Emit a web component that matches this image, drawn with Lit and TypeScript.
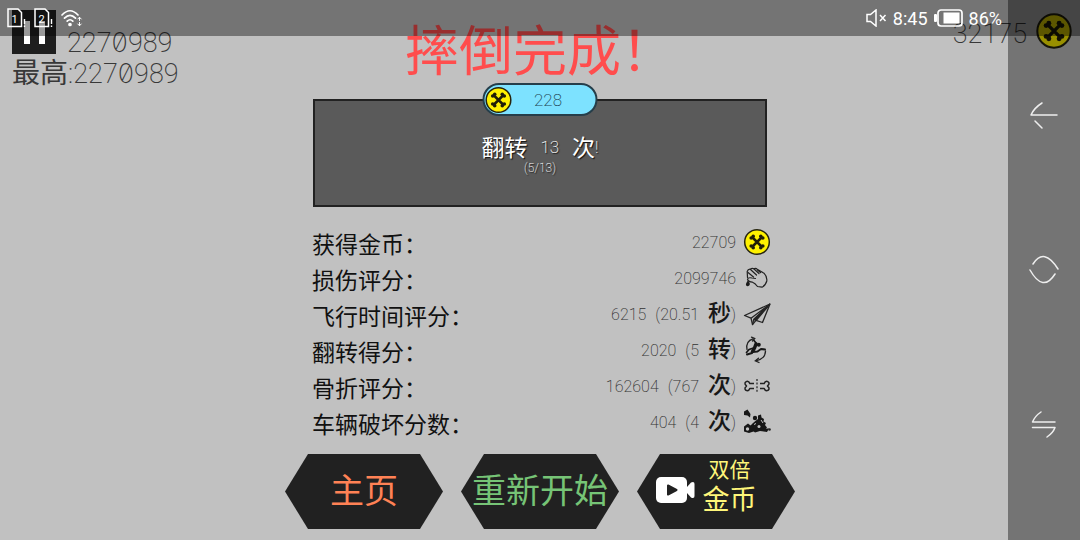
import { LitElement, html, css, svg, nothing } from "lit";
import { customElement, property } from "lit/decorators.js";

type Row = { label: string; value: string; extra?: string; unit?: string; icon: string };

const rows: Row[] = [
  { label: "获得金币：", value: "22709", icon: "coin" },
  { label: "损伤评分：", value: "2099746", icon: "fist" },
  { label: "飞行时间评分：", value: "6215", extra: "(20.51", unit: "秒", icon: "plane" },
  { label: "翻转得分：", value: "2020", extra: "(5", unit: "转", icon: "flip" },
  { label: "骨折评分：", value: "162604", extra: "(767", unit: "次", icon: "bone" },
  { label: "车辆破坏分数：", value: "404", extra: "(4", unit: "次", icon: "crash" },
];

const glyphs: Record<string, unknown> = {
  coin: svg`
    <circle cx="14" cy="14" r="12.3" fill="#fff100" stroke="#26240f" stroke-width="1.5"/>
    <g stroke="#201d08" stroke-width="2.5" fill="none"><path d="M9.5 9.5l9 9M18.5 9.5l-9 9"/></g>
    <g fill="#201d08">
      <circle cx="8.2" cy="10" r="1.8"/><circle cx="10.2" cy="8.3" r="1.8"/>
      <circle cx="17.8" cy="8.3" r="1.8"/><circle cx="19.8" cy="10" r="1.8"/>
      <circle cx="8.2" cy="18" r="1.8"/><circle cx="10.2" cy="19.7" r="1.8"/>
      <circle cx="17.8" cy="19.7" r="1.8"/><circle cx="19.8" cy="18" r="1.8"/>
    </g>`,
  fist: svg`
    <g fill="none" stroke="#222" stroke-width="1.2" stroke-linejoin="round" stroke-linecap="round">
      <path d="M4.5 13.5L4.2 7.5Q5 4.8 7.5 5.2Q9 3.6 11 4.8Q12.8 3.8 14.6 5.6L21 9.2Q24.3 12.500 23.800 17Q22.500 21.500 19 23.200L14.500 22.500Q12 19 9.500 18.200Q5.500 18 4.500 15.200Q5 13.200 9 14L12.500 14.500"/>
      <path d="M7.500 5.500L13.500 11M11 5L16 9.500M5 8.500L10.500 13M14.500 6L17.500 8.500"/>
    </g>
    <path d="M4.800 16.500Q8 19.500 6.200 21.500Q4.500 23 3.200 21.500Q2.200 20 4.800 16.500Z" fill="#1c1c1c"/>`,
  plane: svg`
    <g fill="none" stroke="#252525" stroke-width="1.3" stroke-linejoin="round">
      <path d="M27 4L1.500 15.500L8 18.200L9.500 24.500L13 20.300L19.500 22.500Z"/>
      <path d="M27 4L8 18.200M27 4L10.800 19.200L9.500 24.500M10.800 19.200L13 20.300"/>
      <path d="M25 6.500L11.500 19.500L13.500 20Z" fill="#252525"/>
    </g>`,
  flip: svg`
    <g fill="none" stroke="#222" stroke-width="1.3" stroke-linecap="round">
      <path d="M4 13.500Q2.500 5 10 2.800"/><path d="M8.500 1.200L11.700 2.600L9.500 5"/>
      <path d="M22.500 15Q22.500 22.500 13.500 24.500"/><path d="M15.500 22.200L12.300 24.800L16 26.500"/>
    </g>
    <g fill="none" stroke="#171717" stroke-linecap="round" stroke-linejoin="round">
      <path d="M13 8L11.500 12L9.500 15.500" stroke-width="3.500"/>
      <path d="M9.500 16L14.500 15.500L18 13L22 13.500" stroke-width="2"/>
      <path d="M10.500 12L6 13.500L3.500 16.500M13 7L11 4.500" stroke-width="1.700"/>
      <path d="M9 17L4 18.500" stroke-width="2"/>
    </g>
    <circle cx="15.800" cy="8.800" r="2" fill="#171717"/>`,
  bone: svg`
    <g fill="none" stroke="#222" stroke-width="1.500" stroke-linejoin="round">
      <path d="M11 11.500H6.800Q6 9 3.700 9.400Q1.300 10.300 2.300 12.600L3.500 14L2.300 15.400Q1.300 17.700 3.700 18.600Q6 19 6.800 16.500H11"/>
      <path d="M17 11.500H21.200Q22 9 24.300 9.400Q26.700 10.300 25.700 12.600L24.500 14L25.700 15.400Q26.700 17.700 24.300 18.600Q22 19 21.200 16.500H17"/>
      <path d="M14 7V21" stroke-dasharray="2 1.600" stroke-width="1.200"/>
    </g>`,
  crash: svg`
    <g fill="#171717">
      <path d="M1 3.500L4.500 1.500L7.500 6L7 9.500L4.500 7.500L1 7Z"/>
      <circle cx="12" cy="10" r="2.200"/>
      <path d="M10 15L13 12.500L15 11L15 7.500L18 6.500L18.500 9.500L21 11L20.500 13.500L23 15L22 17L24 19.500L22 22H9L7 18Z"/>
      <path d="M1 18.500L5 15.500L9.500 19L12 23L6 25L1 23.500Z"/>
      <path d="M8 21L26 20.500L24 24L17 23L12 24.500Z"/>
    </g>
    <circle cx="4.500" cy="21" r="1.700" fill="#c1c1c1"/>
    <circle cx="16" cy="18.500" r="1.500" fill="#c1c1c1"/>
    <path d="M18 12L20 15M11 16.500L13 15.500" stroke="#c1c1c1" stroke-width="1"/>
    <circle cx="26.500" cy="21.500" r="1.300" fill="#222"/>`,
};

@customElement("game-icon")
class GameIcon extends LitElement {
  @property() name = "coin";
  static styles = css`
    :host { display: block; flex: none; width: 28px; height: 28px; }
    svg { display: block; width: 100%; height: 100%; }
  `;
  render() {
    return html`<svg viewBox="0 0 28 28" aria-hidden="true">${glyphs[this.name]}</svg>`;
  }
}

@customElement("app-root")
class AppRoot extends LitElement {
  static styles = css`
    :host {
      display: block;
      position: relative;
      min-height: 100vh;
      overflow: hidden;
      background: #c1c1c1;
      color: #111;
      font-family: Roboto, "Noto Sans CJK SC", sans-serif;
    }
    * { box-sizing: border-box; }
    button {
      margin: 0; padding: 0; border: 0; background: none;
      font: inherit; color: inherit; cursor: pointer;
    }
    svg { display: block; }
    .thin { font-weight: 200; font-style: normal; }
    .game { display: grid; grid-template-columns: 1fr 510px 1fr; }

    .hud { padding: 10px 0 0 12px; color: #383838; }
    .now { display: flex; gap: 11px; height: 44px; }
    .pause {
      display: flex; justify-content: center; gap: 9px;
      width: 44px; height: 44px; padding-top: 11px; background: #1e1e1e;
    }
    .pause i { width: 6px; height: 23px; background: #fff; }
    .score { font-size: 27px; line-height: 32px; white-space: nowrap; }
    .now .score { padding-top: 17px; }
    .zero { font-family: Inter, sans-serif; font-feature-settings: "zero"; }
    .best { display: flex; align-items: center; height: 36px; margin-top: 2px; }
    .best b { font-size: 28px; font-weight: 400; line-height: 36px; }
    .wallet {
      display: flex; justify-content: flex-end; align-items: flex-start;
      gap: 8px; padding: 12px 7px 0 0;
      color: #383838; font-size: 27px; line-height: 44px;
    }
    .wallet game-icon { width: 38px; height: 38px; }

    .main { display: flex; flex-direction: column; }
    h1 {
      margin: 20px 0 23px; color: #ff4d4d;
      font: 400 54px/56px "Noto Sans CJK SC", sans-serif;
      text-align: center; white-space: nowrap;
    }
    .panel {
      position: relative; height: 108px; margin: 0 28px; padding-top: 31px;
      border: 2px solid #222; background: #5a5a5a; color: #fff;
      text-align: center; text-shadow: 1px 1px 1px #111;
    }
    .pill {
      position: absolute; top: -18px; left: 50%; transform: translateX(-50%);
      display: flex; align-items: center; width: 115px; height: 33px;
      border: 2px solid #263e4a; border-radius: 17px;
      background: #7de2ff; color: #1d4552; text-shadow: none;
      font-size: 17px;
    }
    .pill span { flex: 1; padding-right: 12px; }
    .feat { display: flex; justify-content: center; align-items: center; gap: 13px; height: 28px; font-size: 23px; }
    .feat .thin { font-size: 17px; padding-top: 2px; }
    .feat span:last-child { display: flex; align-items: center; }
    .step { font-size: 12px; line-height: 16px; }

    dl { margin: 17px 24px 14px 27px; }
    .row { display: flex; align-items: center; height: 36px; }
    dt { flex: 1; padding-top: 2px; font-size: 23px; white-space: nowrap; }
    dd {
      display: flex; align-items: center; margin: 0; gap: 9px;
      color: #333; font-size: 16px;
    }
    .unit { display: flex; align-items: center; }
    .unit b { font-size: 23px; font-weight: 500; line-height: 30px; color: #181818; }
    dd game-icon { margin-left: -2px; }

    .actions { display: flex; gap: 18px; }
    .hex {
      flex: 1; display: flex; justify-content: center; align-items: center;
      height: 75px; background: #212121;
      clip-path: polygon(23px 0, calc(100% - 23px) 0, 100% 50%, calc(100% - 23px) 100%, 23px 100%, 0 50%);
      font-family: "Noto Sans CJK SC", sans-serif; font-size: 34px; line-height: 40px;
      white-space: nowrap;
    }
    .hex span { padding-bottom: 6px; }
    .home { color: #ff8255; }
    .again { color: #76c476; }
    .double { color: #fff67a; gap: 8px; }
    .double span { display: flex; flex-direction: column; align-items: center; padding: 0 20px 12px 0; font-size: 27px; line-height: 34px; }
    .double small { font-size: 21px; line-height: 25px; }
    .double svg { margin: 0 0 4px; }

    .status {
      position: absolute; inset: 0 0 auto 0; height: 36px;
      display: flex; align-items: center; justify-content: space-between;
      padding: 0 78px 0 7px; background: rgba(0, 0, 0, 0.4); color: #fff; font-size: 18px;
      pointer-events: none;
    }
    .info { display: flex; align-items: center; gap: 6px; }
    .nav {
      position: absolute; inset: 0 0 0 auto; width: 72px;
      display: flex; flex-direction: column; padding: 38px 0 39px;
      background: rgba(0, 0, 0, 0.4);
    }
    .nav button { flex: 1; display: grid; place-items: center; }
    .nav svg { fill: none; stroke: #eee; stroke-width: 1.5; stroke-linecap: round; stroke-linejoin: round; }
  `;

  render() {
    const score = html`227<span class="zero">0</span>989`;
    return html`
      <div class="game">
        <div class="hud">
          <div class="now">
            <button class="pause" aria-label="暂停"><i></i><i></i></button>
            <div class="score thin">${score}</div>
          </div>
          <div class="best"><b>最高</b><span class="score thin">:${score}</span></div>
        </div>

        <main class="main">
          <h1>摔倒完成！</h1>
          <section class="panel">
            <div class="pill"><game-icon name="coin"></game-icon><span class="thin">228</span></div>
            <div class="feat"><span>翻转</span><span class="thin">13</span><span>次<i class="thin">!</i></span></div>
            <div class="step thin">(5/13)</div>
          </section>
          <dl>
            ${rows.map((r) => html`
              <div class="row">
                <dt>${r.label}</dt>
                <dd>
                  <span class="thin">${r.value}</span>
                  ${r.extra ? html`<span class="thin">${r.extra}</span>
                    <span class="unit"><b>${r.unit}</b><span class="thin">)</span></span>` : nothing}
                  <game-icon name=${r.icon}></game-icon>
                </dd>
              </div>`)}
          </dl>
          <div class="actions">
            <button class="hex home"><span>主页</span></button>
            <button class="hex again"><span>重新开始</span></button>
            <button class="hex double">
              <svg width="39" height="26" viewBox="0 0 39 26" aria-hidden="true">
                <rect width="31" height="26" rx="5" fill="#fff"/>
                <path d="M31 10L35 5.500Q38.500 4 38.500 7V19Q38.500 22 35 20.500L31 16Z" fill="#fff"/>
                <path d="M12 8.500L20.500 13L12 17.500Z" fill="#212121" stroke="#212121" stroke-width="2" stroke-linejoin="round"/>
              </svg>
              <span><small>双倍</small>金币</span>
            </button>
          </div>
        </main>

        <div class="wallet"><span class="thin">32175</span><game-icon name="coin"></game-icon></div>
      </div>

      <nav class="nav">
        <button aria-label="返回"><svg width="30" height="30"><path d="M28 15H2Q5 8 13 3M6 21L13 28"/></svg></button>
        <button aria-label="主屏幕"><svg width="30" height="30"><path d="M4 10Q15 -7 29 15M1 16Q14 39 26 20"/></svg></button>
        <button aria-label="最近任务"><svg width="30" height="30"><path d="M26 13H3.500Q6 7 12 3M3.500 18.500H26Q24 24 18 28"/></svg></button>
      </nav>

      <div class="status">
        <div class="info">
          ${["1", "2"].map((n) => html`
            <svg width="21" height="20" viewBox="0 0 21 20" aria-hidden="true">
              <path d="M1 1H11L14.500 4.500V18.500H1Z" fill="none" stroke="#fff" stroke-width="1.500"/>
              <text x="7.500" y="14.500" text-anchor="middle" font-size="11" fill="#fff">${n}</text>
              <path d="M17.500 11V16M17.500 17.500V19" stroke="#fff" stroke-width="1.400"/>
            </svg>`)}
          <svg width="22" height="18" viewBox="0 0 22 18" fill="none" stroke="#fff" stroke-width="1.700" stroke-linecap="round" aria-hidden="true">
            <path d="M1 6Q9 -2.500 17 6M3.500 9.200Q9 3.500 14.500 9.200M6.200 12.200Q9 9.300 11.800 12.200"/>
            <circle cx="9" cy="15.500" r="1" fill="#fff"/>
            <path d="M18.500 8.500V11.500M16.800 10L18.500 8.200L20.200 10M18.500 13.500V16.500M16.800 15L18.500 16.800L20.200 15" stroke-width="1"/>
          </svg>
        </div>
        <div class="info">
          <svg width="21" height="18" viewBox="0 0 21 18" fill="none" stroke="#fff" stroke-width="1.500" aria-hidden="true">
            <path d="M1 5.500H4.500L10 1V17L4.500 12.500H1ZM14 6L19.500 12M19.500 6L14 12"/>
          </svg>
          <span>8:45</span>
          <svg width="29" height="18" viewBox="0 0 29 18" aria-hidden="true">
            <rect x="4" y="1" width="24" height="16" rx="3" fill="none" stroke="#fff" stroke-width="1.700"/>
            <rect x="9.500" y="3.500" width="16" height="11" fill="#fff"/>
            <rect x="0" y="5" width="3" height="8" rx="1" fill="#fff"/>
          </svg>
          <span>86%</span>
        </div>
      </div>
    `;
  }
}
